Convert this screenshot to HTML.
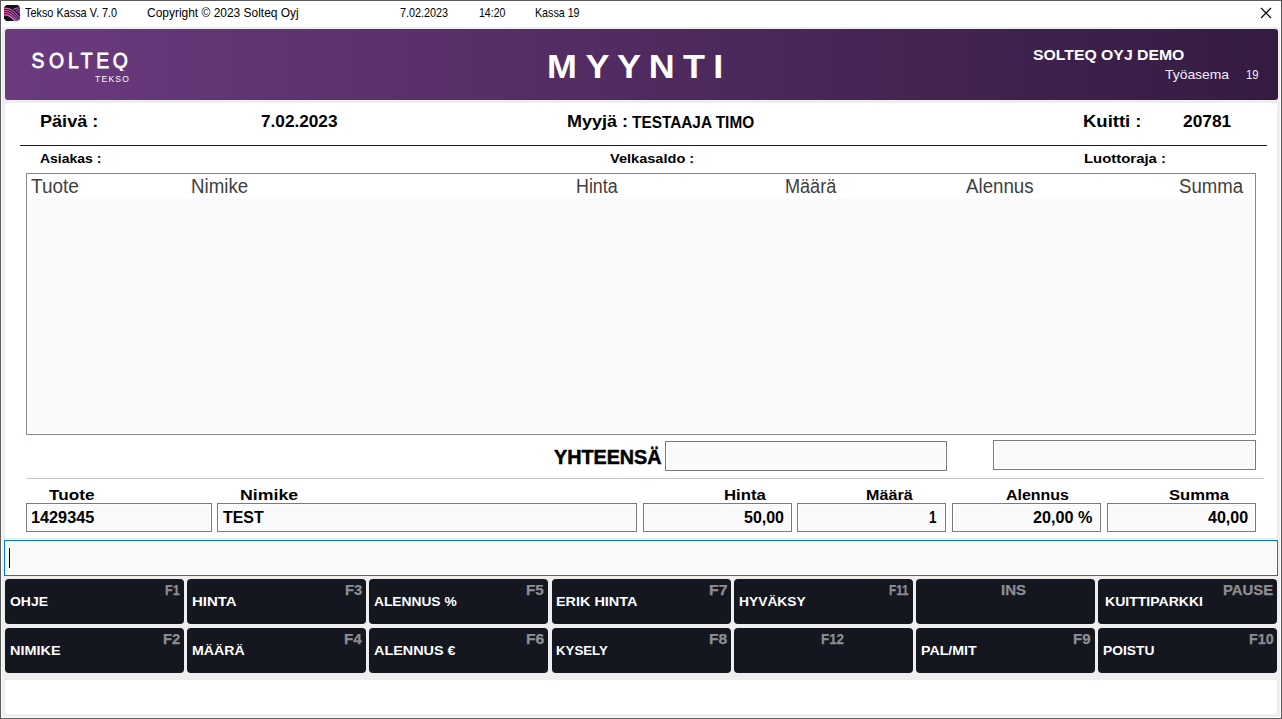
<!DOCTYPE html>
<html lang="fi">
<head>
<meta charset="utf-8">
<title>Tekso Kassa V. 7.0</title>
<style>
html,body{margin:0;padding:0;background:#eeeeee;}
body{width:1282px;height:719px;overflow:hidden;font-family:"Liberation Sans",sans-serif;}
#win{position:absolute;left:0;top:0;width:1282px;height:719px;background:#eeeeee;box-sizing:border-box;overflow:hidden;}
#win div{position:absolute;}
#win:before{content:"";position:absolute;left:0;top:0;width:1280px;height:717px;border:1px solid #5b5b5b;box-shadow:inset 0 0 0 1px rgba(255,255,255,.85);pointer-events:none;z-index:5;}
.t{position:absolute;white-space:nowrap;transform-origin:0 0;}
.box{background:#fafafa;border:1px solid #7a7a7a;box-sizing:border-box;box-shadow:inset 0 0 0 1px #fff;}
.btn{background:#14171f;border-radius:4px;}
</style>
</head>
<body>
<div id="win">
  <div id="titlebar" style="left:1px;top:1px;width:1280px;height:26px;background:#fff;">
    <svg id="appicon" style="position:absolute;left:3px;top:4px" width="16" height="16" viewBox="0 0 16 16">
      <defs>
        <linearGradient id="ig" gradientUnits="userSpaceOnUse" x1="0" y1="0" x2="16" y2="0"><stop offset="0" stop-color="#ee57a6"/><stop offset="0.5" stop-color="#e25fd0"/><stop offset="1" stop-color="#c45cf2"/></linearGradient>
        <clipPath id="ic"><path d="M2.2,0H13.8L16,2.2V13.8L13.8,16H2.2L0,13.8V2.2Z"/></clipPath>
      </defs>
      <path d="M2.2,0H13.8L16,2.2V13.8L13.8,16H2.2L0,13.8V2.2Z" fill="#0f1116"/>
      <g clip-path="url(#ic)" fill="none" stroke="url(#ig)" stroke-width="1.05">
        <path d="M0,3.1C4.5,3.1 6.5,3.6 9.5,6.4S14.5,11.2 16,12.6"/>
        <path d="M0,5.2C4,5.2 6,5.8 8.8,8.4S13.5,13.2 16,15.4"/>
        <path d="M0,7.3C3.6,7.3 5.4,7.9 8,10.3S12,14.2 14.2,16.2"/>
        <path d="M0,9.6C3.4,9.5 4.8,10 7.2,12.2S10.6,15.2 12,16.4" stroke-width="1.6"/>
        <path d="M16,2.8C13.5,2.8 11.5,3 9.4,4.5"/>
        <path d="M16,4.8C14.4,4.8 13,5 11.6,6.1"/>
        <path d="M16,6.8C15.2,6.8 14.4,7 13.6,7.8"/>
        <path d="M16,8.8C15.6,8.8 15.4,9 15.1,9.5"/>
      </g>
    </svg>
    <svg id="closex" style="position:absolute;left:1259px;top:6px" width="12" height="12" viewBox="0 0 12 12"><path d="M1,1L11,11M11,1L1,11" stroke="#000" stroke-width="1.1" fill="none"/></svg>
    <span class="t" style="left:24.13px;top:5px;line-height:14px;font-size:12.4px;font-weight:400;color:#000;transform:scaleX(0.8775)">Tekso Kassa V. 7.0</span>
    <span class="t" style="left:145.94px;top:5px;line-height:14px;font-size:12.4px;font-weight:400;color:#000;transform:scaleX(0.9652)">Copyright © 2023 Solteq Oyj</span>
    <span class="t" style="left:398.79px;top:5px;line-height:14px;font-size:12.4px;font-weight:400;color:#000;transform:scaleX(0.8728)">7.02.2023</span>
    <span class="t" style="left:477.84px;top:5px;line-height:14px;font-size:12.4px;font-weight:400;color:#000;transform:scaleX(0.8515)">14:20</span>
    <span class="t" style="left:533.86px;top:5px;line-height:14px;font-size:12.4px;font-weight:400;color:#000;transform:scaleX(0.8620)">Kassa 19</span>
  </div>
  <div id="banner" style="left:5px;top:29px;width:1273px;height:71px;border-radius:3px;background:linear-gradient(90deg,#6b3a7f,#341b41);">
    <svg id="bannertext" style="position:absolute;left:0;top:0" width="1273" height="71" viewBox="0 0 1273 71" font-family="Liberation Sans, sans-serif" fill="#fff">
      <clipPath id="logoclip"><rect x="20" y="15" width="110" height="26.9"/></clipPath>
      <g clip-path="url(#logoclip)"><text id="logo" x="30.17 49.99 71.71 86.19 103.57 122.32" y="39.4" font-size="22" stroke="#fff" stroke-width="0.8" transform="scale(0.88,1)">SOLTEQ</text></g>
      <text id="heading" x="497.22 532.58 561.39 590.57 622.10 649.67" y="48.7" font-size="33" font-weight="700" transform="scale(1.09,1)">MYYNTI</text>
    </svg>
    <span class="t" style="letter-spacing:1.41px;left:90.47px;top:44px;line-height:11px;font-size:9.7px;font-weight:400;color:#fff;transform:scaleX(0.8800)">TEKSO</span>
    <span class="t" style="left:1027.95px;top:18px;line-height:16px;font-size:14.5px;font-weight:700;color:#fff;transform:scaleX(1.0882)">SOLTEQ OYJ DEMO</span>
    <span class="t" style="left:1159.78px;top:38px;line-height:15px;font-size:13.1px;font-weight:400;color:#f3eef6;transform:scaleX(1.0611)">Työasema</span>
    <span class="t" style="left:1241.09px;top:38px;line-height:15px;font-size:13.1px;font-weight:400;color:#f3eef6;transform:scaleX(0.8698)">19</span>
  </div>
  <div id="main" style="left:5px;top:103px;width:1272px;height:435px;background:#fff;border-radius:3px;">
    <div class="hr" style="left:15px;top:42px;width:1247px;height:1px;background:#1a1a1a"></div>
    <div class="hr" style="left:22px;top:375px;width:1237px;height:1px;background:#c6c6c6"></div>
    <span class="t" style="left:34.57px;top:8px;line-height:20px;font-size:17.3px;font-weight:700;color:#000;transform:scaleX(1.0458)">Päivä :</span>
    <span class="t" style="left:255.86px;top:8px;line-height:20px;font-size:17.3px;font-weight:700;color:#000;transform:scaleX(0.9948)">7.02.2023</span>
    <span class="t" style="left:562.48px;top:8px;line-height:20px;font-size:17.3px;font-weight:700;color:#000;transform:scaleX(1.0404)">Myyjä :</span>
    <span class="t" style="left:627.00px;top:10px;line-height:18px;font-size:16.5px;font-weight:700;color:#000;transform:scaleX(0.9319)">TESTAAJA TIMO</span>
    <span class="t" style="left:1078.44px;top:8px;line-height:20px;font-size:17.3px;font-weight:700;color:#000;transform:scaleX(1.0699)">Kuitti :</span>
    <span class="t" style="left:1178.26px;top:8px;line-height:20px;font-size:17.3px;font-weight:700;color:#000;transform:scaleX(1.0035)">20781</span>
    <span class="t" style="left:35.18px;top:48px;line-height:15px;font-size:13.3px;font-weight:700;color:#000;transform:scaleX(1.0509)">Asiakas :</span>
    <span class="t" style="left:605.30px;top:48px;line-height:15px;font-size:13.3px;font-weight:700;color:#000;transform:scaleX(1.0953)">Velkasaldo :</span>
    <span class="t" style="left:1078.67px;top:48px;line-height:15px;font-size:13.3px;font-weight:700;color:#000;transform:scaleX(1.1207)">Luottoraja :</span>
    <span class="t" style="-webkit-text-stroke:0.5px;left:548.99px;top:343px;line-height:22px;font-size:20.2px;font-weight:700;color:#000;transform:scaleX(0.9781)">YHTEENSÄ</span>
    <span class="t" style="left:44.20px;top:384px;line-height:16px;font-size:14.2px;font-weight:700;color:#000;transform:scaleX(1.2111)">Tuote</span>
    <span class="t" style="left:235.49px;top:384px;line-height:16px;font-size:14.2px;font-weight:700;color:#000;transform:scaleX(1.2510)">Nimike</span>
    <span class="t" style="left:719.05px;top:384px;line-height:16px;font-size:14.2px;font-weight:700;color:#000;transform:scaleX(1.1815)">Hinta</span>
    <span class="t" style="left:860.69px;top:384px;line-height:16px;font-size:14.2px;font-weight:700;color:#000;transform:scaleX(1.1379)">Määrä</span>
    <span class="t" style="left:1001.45px;top:384px;line-height:16px;font-size:14.2px;font-weight:700;color:#000;transform:scaleX(1.1246)">Alennus</span>
    <span class="t" style="left:1164.14px;top:384px;line-height:16px;font-size:14.2px;font-weight:700;color:#000;transform:scaleX(1.1727)">Summa</span>
    <div id="grid" style="left:21px;top:70px;width:1230px;height:262px;background:#fff;border:1px solid #828790;box-sizing:border-box;">
      <div class="gridbody" style="left:1px;top:25px;width:1226px;height:234px;background:#fafafa"></div>
      <span class="t" style="left:3.90px;top:1px;line-height:22px;font-size:20px;font-weight:400;color:#404040;transform:scaleX(0.9497)">Tuote</span>
      <span class="t" style="left:164.04px;top:1px;line-height:22px;font-size:20px;font-weight:400;color:#404040;transform:scaleX(0.9363)">Nimike</span>
      <span class="t" style="left:548.71px;top:1px;line-height:22px;font-size:20px;font-weight:400;color:#404040;transform:scaleX(0.8927)">Hinta</span>
      <span class="t" style="left:758.29px;top:1px;line-height:22px;font-size:20px;font-weight:400;color:#404040;transform:scaleX(0.9031)">Määrä</span>
      <span class="t" style="left:939.20px;top:1px;line-height:22px;font-size:20px;font-weight:400;color:#404040;transform:scaleX(0.9351)">Alennus</span>
      <span class="t" style="left:1152.42px;top:1px;line-height:22px;font-size:20px;font-weight:400;color:#404040;transform:scaleX(0.9283)">Summa</span>
    </div>
    <div id="f_total1" class="box" style="left:660px;top:338px;width:282px;height:30px;">
    </div>
    <div id="f_total2" class="box" style="left:988px;top:337px;width:263px;height:30px;">
    </div>
    <div id="f_tuote" class="box" style="left:21px;top:400px;width:186px;height:29px;">
      <span class="t" style="left:3.69px;top:4px;line-height:18px;font-size:16.5px;font-weight:700;color:#000;transform:scaleX(0.9842)">1429345</span>
    </div>
    <div id="f_nimike" class="box" style="left:212px;top:400px;width:420px;height:29px;">
      <span class="t" style="left:5.40px;top:4px;line-height:18px;font-size:16.5px;font-weight:700;color:#000;transform:scaleX(0.9634)">TEST</span>
    </div>
    <div id="f_hinta" class="box" style="left:638px;top:400px;width:149px;height:29px;">
      <span class="t" style="left:100.25px;top:4px;line-height:18px;font-size:16.5px;font-weight:700;color:#000;transform:scaleX(0.9687)">50,00</span>
    </div>
    <div id="f_maara" class="box" style="left:792px;top:400px;width:149px;height:29px;">
      <span class="t" style="left:131.46px;top:4px;line-height:18px;font-size:16.5px;font-weight:700;color:#000;transform:scaleX(0.8145)">1</span>
    </div>
    <div id="f_alennus" class="box" style="left:947px;top:400px;width:149px;height:29px;">
      <span class="t" style="left:79.89px;top:4px;line-height:18px;font-size:16.5px;font-weight:700;color:#000;transform:scaleX(0.9800)">20,00 %</span>
    </div>
    <div id="f_summa" class="box" style="left:1102px;top:400px;width:149px;height:29px;">
      <span class="t" style="left:100.00px;top:4px;line-height:18px;font-size:16.5px;font-weight:700;color:#000;transform:scaleX(0.9724)">40,00</span>
    </div>
  </div>
  <div id="cmd" style="left:4px;top:540px;width:1274px;height:36px;background:#fafafa;border:1px solid #0078d7;box-sizing:border-box;box-shadow:inset 0 0 0 1px #fff,0 0 0 1px #f7f0ea;">
    <div class="caret" style="left:4px;top:7px;width:1px;height:20px;background:#000"></div>
  </div>
  <div id="b00" class="btn" style="left:5px;top:579px;width:179px;height:45px;">
    <span class="t" style="left:4.96px;top:15px;line-height:15px;font-size:13.2px;font-weight:700;color:#fff;transform:scaleX(1.0601)">OHJE</span>
    <span class="t key" style="-webkit-text-stroke:0.25px;left:160.02px;top:3px;line-height:16px;font-size:14.0px;font-weight:700;color:#8c8e93;transform:scaleX(0.8932)">F1</span>
  </div>
  <div id="b01" class="btn" style="left:5px;top:628px;width:179px;height:45px;">
    <span class="t" style="left:4.50px;top:15px;line-height:15px;font-size:13.2px;font-weight:700;color:#fff;transform:scaleX(1.0949)">NIMIKE</span>
    <span class="t key" style="-webkit-text-stroke:0.25px;left:157.77px;top:3px;line-height:16px;font-size:14.0px;font-weight:700;color:#8c8e93;transform:scaleX(1.0586)">F2</span>
  </div>
  <div id="b10" class="btn" style="left:187px;top:579px;width:179px;height:45px;">
    <span class="t" style="left:4.56px;top:15px;line-height:15px;font-size:13.2px;font-weight:700;color:#fff;transform:scaleX(1.1366)">HINTA</span>
    <span class="t key" style="-webkit-text-stroke:0.25px;left:157.88px;top:3px;line-height:16px;font-size:14.0px;font-weight:700;color:#8c8e93;transform:scaleX(1.0520)">F3</span>
  </div>
  <div id="b11" class="btn" style="left:187px;top:628px;width:179px;height:45px;">
    <span class="t" style="left:4.62px;top:15px;line-height:15px;font-size:13.2px;font-weight:700;color:#fff;transform:scaleX(1.0718)">MÄÄRÄ</span>
    <span class="t key" style="-webkit-text-stroke:0.25px;left:156.95px;top:3px;line-height:16px;font-size:14.0px;font-weight:700;color:#8c8e93;transform:scaleX(1.0803)">F4</span>
  </div>
  <div id="b20" class="btn" style="left:369px;top:579px;width:179px;height:45px;">
    <span class="t" style="left:4.78px;top:15px;line-height:15px;font-size:13.2px;font-weight:700;color:#fff;transform:scaleX(1.0442)">ALENNUS %</span>
    <span class="t key" style="-webkit-text-stroke:0.25px;left:157.45px;top:3px;line-height:16px;font-size:14.0px;font-weight:700;color:#8c8e93;transform:scaleX(1.0851)">F5</span>
  </div>
  <div id="b21" class="btn" style="left:369px;top:628px;width:179px;height:45px;">
    <span class="t" style="left:4.77px;top:15px;line-height:15px;font-size:13.2px;font-weight:700;color:#fff;transform:scaleX(1.0915)">ALENNUS €</span>
    <span class="t key" style="-webkit-text-stroke:0.25px;left:156.82px;top:3px;line-height:16px;font-size:14.0px;font-weight:700;color:#8c8e93;transform:scaleX(1.1248)">F6</span>
  </div>
  <div id="b30" class="btn" style="left:552px;top:579px;width:179px;height:45px;">
    <span class="t" style="left:4.30px;top:15px;line-height:15px;font-size:13.2px;font-weight:700;color:#fff;transform:scaleX(1.0929)">ERIK HINTA</span>
    <span class="t key" style="-webkit-text-stroke:0.25px;left:156.60px;top:3px;line-height:16px;font-size:14.0px;font-weight:700;color:#8c8e93;transform:scaleX(1.1413)">F7</span>
  </div>
  <div id="b31" class="btn" style="left:552px;top:628px;width:179px;height:45px;">
    <span class="t" style="left:4.37px;top:15px;line-height:15px;font-size:13.2px;font-weight:700;color:#fff;transform:scaleX(1.0033)">KYSELY</span>
    <span class="t key" style="-webkit-text-stroke:0.25px;left:156.62px;top:3px;line-height:16px;font-size:14.0px;font-weight:700;color:#8c8e93;transform:scaleX(1.1248)">F8</span>
  </div>
  <div id="b40" class="btn" style="left:734px;top:579px;width:179px;height:45px;">
    <span class="t" style="left:4.84px;top:15px;line-height:15px;font-size:13.2px;font-weight:700;color:#fff;transform:scaleX(1.0470)">HYVÄKSY</span>
    <span class="t key" style="-webkit-text-stroke:0.25px;left:155.27px;top:3px;line-height:16px;font-size:14.0px;font-weight:700;color:#8c8e93;transform:scaleX(0.8360)">F11</span>
  </div>
  <div id="b41" class="btn" style="left:734px;top:628px;width:179px;height:45px;">
    <span class="t key" style="-webkit-text-stroke:0.25px;left:87.26px;top:3px;line-height:16px;font-size:14.0px;font-weight:700;color:#8c8e93;transform:scaleX(0.9563)">F12</span>
  </div>
  <div id="b50" class="btn" style="left:916px;top:579px;width:179px;height:45px;">
    <span class="t key" style="-webkit-text-stroke:0.25px;left:84.96px;top:3px;line-height:16px;font-size:14.0px;font-weight:700;color:#8c8e93;transform:scaleX(1.0727)">INS</span>
  </div>
  <div id="b51" class="btn" style="left:916px;top:628px;width:179px;height:45px;">
    <span class="t" style="left:4.81px;top:15px;line-height:15px;font-size:13.2px;font-weight:700;color:#fff;transform:scaleX(1.0752)">PAL/MIT</span>
    <span class="t key" style="-webkit-text-stroke:0.25px;left:157.26px;top:3px;line-height:16px;font-size:14.0px;font-weight:700;color:#8c8e93;transform:scaleX(1.0785)">F9</span>
  </div>
  <div id="b60" class="btn" style="left:1098px;top:579px;width:179px;height:45px;">
    <span class="t" style="left:6.92px;top:15px;line-height:15px;font-size:13.2px;font-weight:700;color:#fff;transform:scaleX(1.0647)">KUITTIPARKKI</span>
    <span class="t key" style="-webkit-text-stroke:0.25px;left:124.97px;top:3px;line-height:16px;font-size:14.0px;font-weight:700;color:#8c8e93;transform:scaleX(1.0620)">PAUSE</span>
  </div>
  <div id="b61" class="btn" style="left:1098px;top:628px;width:179px;height:45px;">
    <span class="t" style="left:5.13px;top:15px;line-height:15px;font-size:13.2px;font-weight:700;color:#fff;transform:scaleX(1.0493)">POISTU</span>
    <span class="t key" style="-webkit-text-stroke:0.25px;left:150.71px;top:3px;line-height:16px;font-size:14.0px;font-weight:700;color:#8c8e93;transform:scaleX(1.0184)">F10</span>
  </div>
  <div id="status" style="left:5px;top:680px;width:1272px;height:34px;background:#fff;border-radius:3px;">
  </div>
</div>
</body>
</html>
